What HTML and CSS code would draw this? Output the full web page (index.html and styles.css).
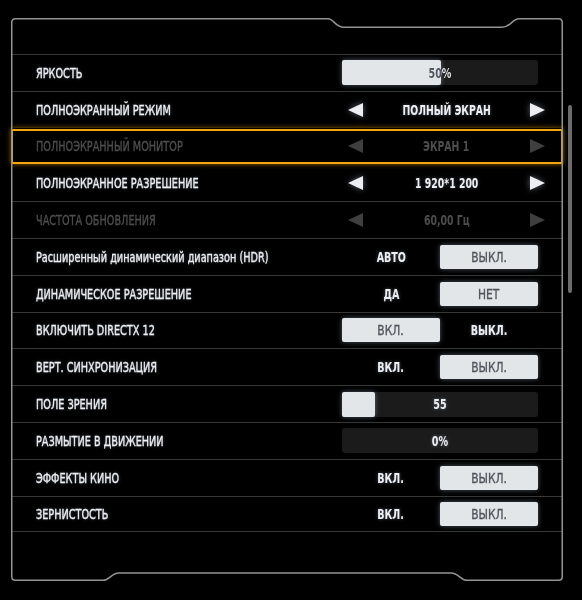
FILE: index.html
```html
<!DOCTYPE html>
<html lang="ru">
	<head>
		<meta charset="UTF-8">
		<title>Настройки экрана</title>
		<link rel="stylesheet" href="styles.css">
	</head>
	<body>
		<div class="screen">
			<div class="panel">
				<svg class="frame" width="552" height="563" viewBox="0 0 552 563">
					<path d="M0.75 4.5 Q0.75 0.75 4.5 0.75 L317 0.75 C323 0.75 324 9.25 333 9.25 L491 9.25 C500 9.25 501 0.75 508 0.75 L547.5 0.75 Q551.25 0.75 551.25 4.5 L551.25 558.5 Q551.25 562.25 547.5 562.25 L456 562.25 C449 562.25 448 555 440 555 L108 555 C100 555 99 562.25 92 562.25 L4.5 562.25 Q0.75 562.25 0.75 558.5 Z"/>
				</svg>
				<ul class="rows">
					<li class="row">
						<span class="label"><span>ЯРКОСТЬ</span></span>
						<div class="slider">
							<span class="val split" style="--fill:50.7%"><span>50%</span></span>
							<div class="fill" style="width:50.5%"></div>
						</div>
					</li>
					<li class="row">
						<span class="label"><span>ПОЛНОЭКРАННЫЙ РЕЖИМ</span></span>
						<div class="selector">
							<i class="arrow left"></i>
							<span class="choice">ПОЛНЫЙ ЭКРАН</span>
							<i class="arrow right"></i>
						</div>
					</li>
					<li class="row off focus">
						<span class="label"><span>ПОЛНОЭКРАННЫЙ МОНИТОР</span></span>
						<div class="selector">
							<i class="arrow left"></i>
							<span class="choice">ЭКРАН 1</span>
							<i class="arrow right"></i>
						</div>
					</li>
					<li class="row">
						<span class="label"><span>ПОЛНОЭКРАННОЕ РАЗРЕШЕНИЕ</span></span>
						<div class="selector">
							<i class="arrow left"></i>
							<span class="choice">1 920*1 200</span>
							<i class="arrow right"></i>
						</div>
					</li>
					<li class="row off">
						<span class="label"><span>ЧАСТОТА ОБНОВЛЕНИЯ</span></span>
						<div class="selector">
							<i class="arrow left"></i>
							<span class="choice">60,00 Гц</span>
							<i class="arrow right"></i>
						</div>
					</li>
					<li class="row">
						<span class="label"><span>Расширенный динамический диапазон (HDR)</span></span>
						<div class="toggle">
							<span class="opt"><span>АВТО</span></span>
							<span class="opt on"><span>ВЫКЛ.</span></span>
						</div>
					</li>
					<li class="row">
						<span class="label"><span>ДИНАМИЧЕСКОЕ РАЗРЕШЕНИЕ</span></span>
						<div class="toggle">
							<span class="opt"><span>ДА</span></span>
							<span class="opt on"><span>НЕТ</span></span>
						</div>
					</li>
					<li class="row">
						<span class="label"><span>ВКЛЮЧИТЬ DIRECTX 12</span></span>
						<div class="toggle">
							<span class="opt on"><span>ВКЛ.</span></span>
							<span class="opt"><span>ВЫКЛ.</span></span>
						</div>
					</li>
					<li class="row">
						<span class="label"><span>ВЕРТ. СИНХРОНИЗАЦИЯ</span></span>
						<div class="toggle">
							<span class="opt"><span>ВКЛ.</span></span>
							<span class="opt on"><span>ВЫКЛ.</span></span>
						</div>
					</li>
					<li class="row">
						<span class="label"><span>ПОЛЕ ЗРЕНИЯ</span></span>
						<div class="slider">
							<span class="val"><span>55</span></span>
							<div class="knob"></div>
						</div>
					</li>
					<li class="row">
						<span class="label"><span>РАЗМЫТИЕ В ДВИЖЕНИИ</span></span>
						<div class="slider">
							<span class="val"><span>0%</span></span>
						</div>
					</li>
					<li class="row">
						<span class="label"><span>ЭФФЕКТЫ КИНО</span></span>
						<div class="toggle">
							<span class="opt"><span>ВКЛ.</span></span>
							<span class="opt on"><span>ВЫКЛ.</span></span>
						</div>
					</li>
					<li class="row">
						<span class="label"><span>ЗЕРНИСТОСТЬ</span></span>
						<div class="toggle">
							<span class="opt"><span>ВКЛ.</span></span>
							<span class="opt on"><span>ВЫКЛ.</span></span>
						</div>
					</li>
				</ul>
			</div>
			<div class="scrollbar"></div>
		</div>
	</body>
</html>
```
FILE: styles.css
```css
:root{
	--text:#eceef1;
	--dim:#4e4e4e;
	--line:#373737;
	--chip:#e3e6e9;
	--chip-text:#4f555c;
	--glow:rgba(200,220,255,.4);
}
body{
	margin:0;
	background:#000;
	color:var(--text);
	font-family:"DejaVu Sans Condensed","DejaVu Sans",sans-serif;
	font-stretch:condensed;
	font-size:14px;
}
.screen{
	display:flex;
	padding:18px 0 0 11px;
}
.panel{
	position:relative;
	width:552px;
	height:563px;
}
.frame{
	position:absolute;
	left:0;
	top:0;
	pointer-events:none;
}
.frame path{
	fill:none;
	stroke:#939393;
	stroke-width:1.5;
}
.rows{
	list-style:none;
	margin:0;
	padding:36px 0 0;
}
.row{
	display:flex;
	align-items:center;
	height:36.8px;
	box-sizing:border-box;
	border-top:1px solid var(--line);
	padding:0 25px;
}
.row:last-child{
	border-bottom:1px solid var(--line);
}
.row.focus{
	box-shadow:inset 0 0 0 2px #f2a60c, 0 0 5px rgba(242,166,12,.6);
	border-top-color:transparent;
}
.row.focus + .row{
	border-top-color:transparent;
}
.label{
	flex:1;
	text-shadow:0 0 4px var(--glow);
	-webkit-text-stroke:.35px currentColor;
}
/* the game font is narrow, squeeze the text */
.label span{
	display:inline-block;
	white-space:nowrap;
	transform:scaleX(.77);
	transform-origin:0 50%;
}
.off .label,
.off .choice{
	color:var(--dim);
	text-shadow:none;
}

/* sliders */
.slider{
	position:relative;
	width:196px;
	height:25px;
	background:#1b1b1b;
	border-radius:3px;
	display:flex;
}
.val{
	position:relative;
	z-index:1;
	flex:1;
	display:flex;
	align-items:center;
	justify-content:center;
	font-weight:bold;
	text-shadow:0 0 4px var(--glow);
	transform:scaleX(.76);
}
.val.split{
	background:linear-gradient(90deg, var(--chip-text) var(--fill), var(--text) var(--fill));
	-webkit-background-clip:text;
	background-clip:text;
	color:transparent;
	text-shadow:none;
}
.fill,
.knob{
	position:absolute;
	left:0;
	top:0;
	bottom:0;
	background:var(--chip);
	border-radius:2px;
	box-shadow:0 0 5px var(--glow);
}
.knob{
	width:33px;
}

/* arrow selectors */
.selector{
	width:197px;
	margin:0 -7px 0 6px;
	display:flex;
	align-items:center;
	justify-content:space-between;
}
.choice{
	font-weight:bold;
	white-space:nowrap;
	text-shadow:0 0 4px var(--glow);
	transform:scaleX(.74);
}
.arrow{
	width:0;
	height:0;
	border-top:7px solid transparent;
	border-bottom:7px solid transparent;
	filter:drop-shadow(0 0 3px rgba(200,220,255,.45));
}
.arrow.left{
	border-right:15px solid var(--text);
}
.arrow.right{
	border-left:15px solid var(--text);
}
.off .arrow{
	filter:none;
	border-left-color:transparent;
	border-right-color:transparent;
}
.off .arrow.left{
	border-right-color:#3f3f3f;
}
.off .arrow.right{
	border-left-color:#3f3f3f;
}

/* two-way toggles */
.toggle{
	width:196px;
	display:flex;
}
.opt{
	width:98px;
	height:24px;
	display:flex;
	align-items:center;
	justify-content:center;
	font-weight:bold;
	text-shadow:0 0 4px var(--glow);
}
.opt span{
	display:inline-block;
	transform:scaleX(.76);
}
.opt.on{
	background:var(--chip);
	color:var(--chip-text);
	font-weight:normal;
	border-radius:2px;
	box-shadow:0 0 5px var(--glow);
	text-shadow:none;
	-webkit-text-stroke:.3px currentColor;
}
.opt.on span{
	transform:scaleX(.85);
}

.scrollbar{
	width:4px;
	height:188px;
	margin:87px 0 0 5px;
	background:#6c6c6c;
	border-radius:2px;
}
```
